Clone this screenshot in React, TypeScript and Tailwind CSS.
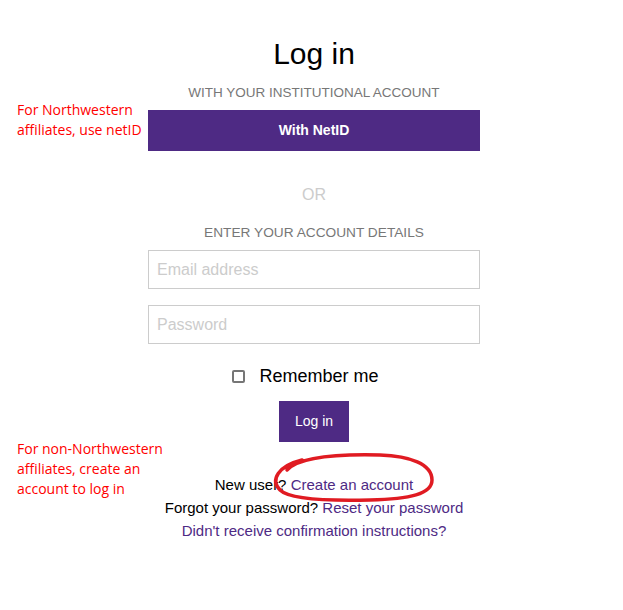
import React from "react";

const note = "absolute left-[17px] text-[14px] leading-[20px] text-[#ff0000] font-['Open_Sans',sans-serif]";

export default function App() {
  return (
    <div className="relative w-full h-[610px] bg-white font-['Liberation_Sans',Arial,sans-serif]">
      {/* annotations */}
      <p className={`${note} top-[100px]`}>
        For Northwestern
        <br />
        affiliates, use netID
      </p>
      <p className={`${note} top-[439px]`}>
        For non-Northwestern
        <br />
        affiliates, create an
        <br />
        account to log in
      </p>

      <div className="flex justify-center pl-[5px]">
        <div className="w-[332px] flex flex-col items-center">
          <h1 className="pt-[36px] text-[30px] leading-[36px] text-black">Log in</h1>
          <p className="mt-[11px] text-[13.5px] leading-[20px] text-[#777777] uppercase">
            With your institutional account
          </p>
          <button className="mt-[7px] w-full h-[41px] bg-[#4e2a84] text-white text-[14px] font-bold">
            With NetID
          </button>

          <p className="mt-[34px] text-[16px] leading-[20px] text-[#cccccc]">OR</p>
          <p className="mt-[18px] text-[13.7px] leading-[20px] text-[#777777] uppercase">
            Enter your account details
          </p>

          <input
            className="mt-[7px] w-full h-[39px] border border-[#cccccc] px-[8px] text-[16px] placeholder:text-[#cccccc] outline-none"
            placeholder="Email address"
          />
          <input
            type="password"
            className="mt-[16px] w-full h-[39px] border border-[#cccccc] px-[8px] text-[16px] placeholder:text-[#cccccc] outline-none"
            placeholder="Password"
          />

          <label className="mt-[20px] mr-[17px] flex items-center gap-[14px] text-[18px] leading-[24px] text-black">
            <span className="w-[13px] h-[13px] border-2 border-[#767676] rounded-[2px]" />
            Remember me
          </label>

          <button className="mt-[13px] h-[41px] px-[16px] bg-[#4e2a84] text-white text-[14px]">
            Log in
          </button>

          <div className="mt-[31px] flex flex-col items-center text-[15px] leading-[23px] text-black">
            <p>
              New user? <a className="text-[#4e2a84]">Create an account</a>
            </p>
            <p>
              Forgot your password? <a className="text-[#4e2a84]">Reset your password</a>
            </p>
            <p>
              <a className="text-[#4e2a84]">Didn't receive confirmation instructions?</a>
            </p>
          </div>
        </div>
      </div>

      {/* hand-drawn circle around the sign-up link */}
      <svg className="absolute left-0 top-0 pointer-events-none" width="623" height="610">
        <path
          d="M 287 470 C 300 456, 340 454, 380 455 C 410 456, 432 464, 432 480 C 432 494, 410 499, 370 500 C 330 501, 290 500, 280 490 C 270 480, 278 466, 302 460"
          fill="none"
          stroke="#e01b22"
          strokeWidth="3.5"
          strokeLinecap="round"
        />
      </svg>
    </div>
  );
}
